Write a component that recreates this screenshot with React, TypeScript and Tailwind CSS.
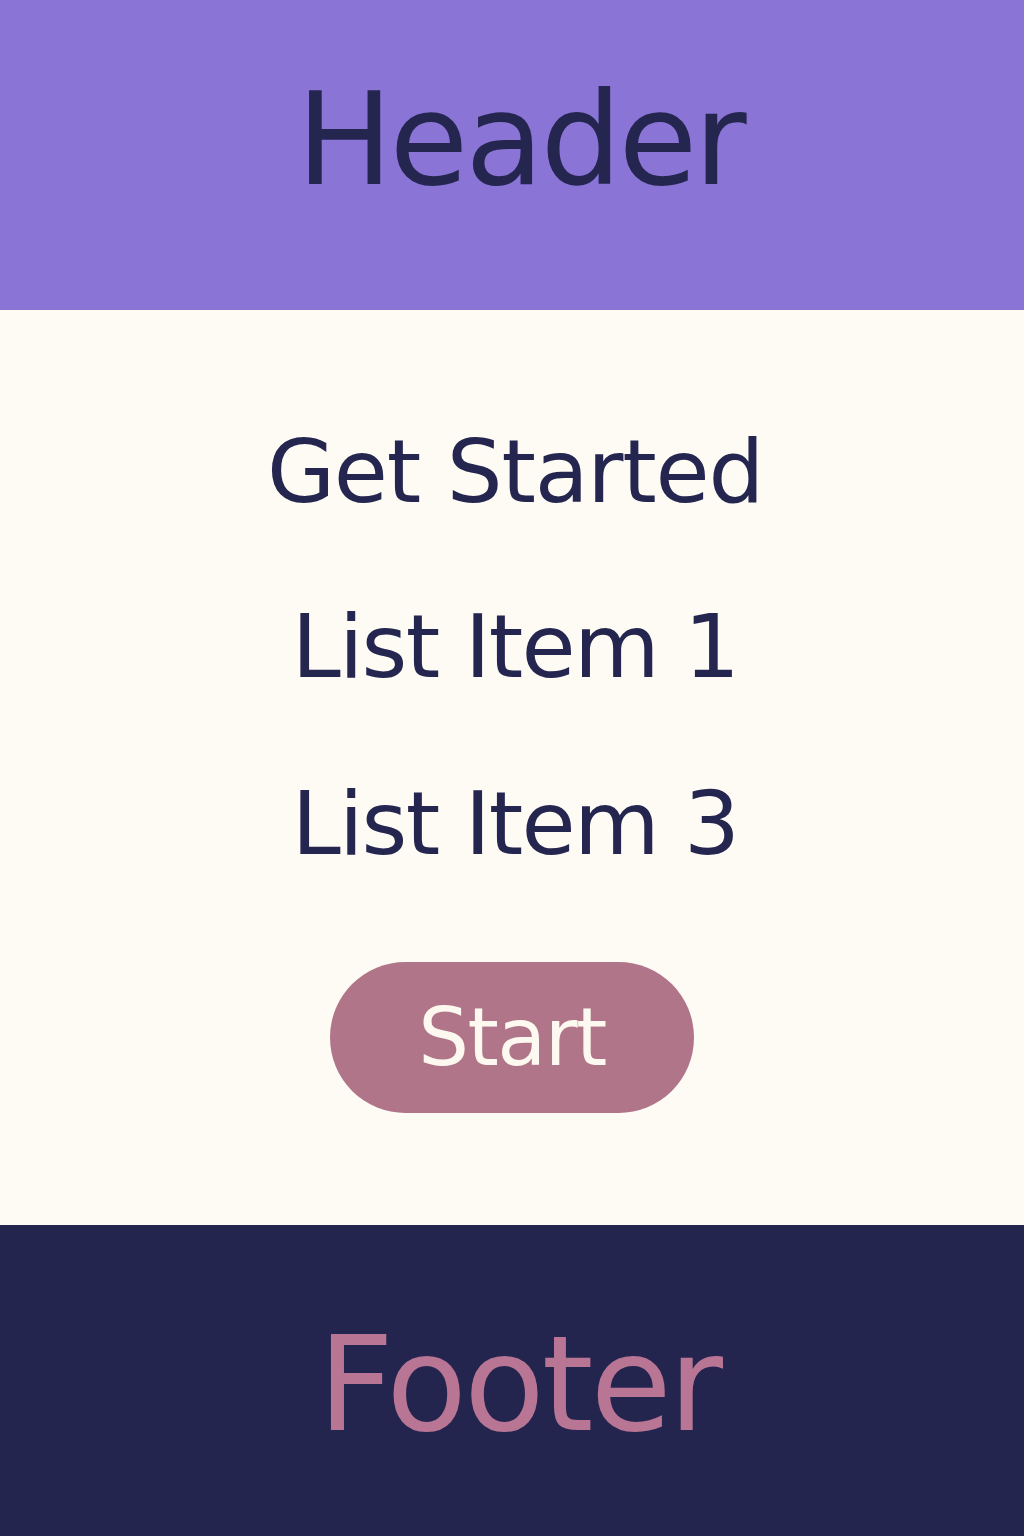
export default function App() {
  return (
    <div className="flex min-h-[1536px] w-full flex-col font-['DejaVu_Sans',sans-serif]">
      {/* Header */}
      <header className="flex h-[310px] justify-center bg-[#8a74d6] pt-[76px]">
        <h1 className="h-fit pl-[16px] text-[128px] leading-none tracking-[-0.025em] text-[#24264f]">Header</h1>
      </header>

      {/* Main */}
      <main className="flex h-[915px] flex-col items-center bg-[#fefaf4] pt-[118px] pl-[6px]">
        <h2 className="text-[88px] leading-[88px] tracking-[-0.014em] text-[#24264f]">Get Started</h2>
        <ul className="mt-[87px] flex flex-col items-center gap-[89px]">
          <li className="text-[88px] leading-[88px] tracking-[-0.02em] text-[#24264f]">List Item 1</li>
          <li className="text-[88px] leading-[88px] tracking-[-0.02em] text-[#24264f]">List Item 3</li>
        </ul>
        <button className="mt-[94px] -ml-[6px] flex h-[151px] w-[364px] items-center justify-center rounded-full bg-[#b07589] text-[80px] leading-none tracking-[-0.02em] text-[#fdf8f0]">
          Start
        </button>
      </main>

      {/* Footer */}
      <footer className="flex h-[311px] justify-center bg-[#24254f] pt-[93px]">
        <p className="h-fit pl-[14px] text-[132px] leading-none tracking-[-0.023em] text-[#b87594]">Footer</p>
      </footer>
    </div>
  );
}
